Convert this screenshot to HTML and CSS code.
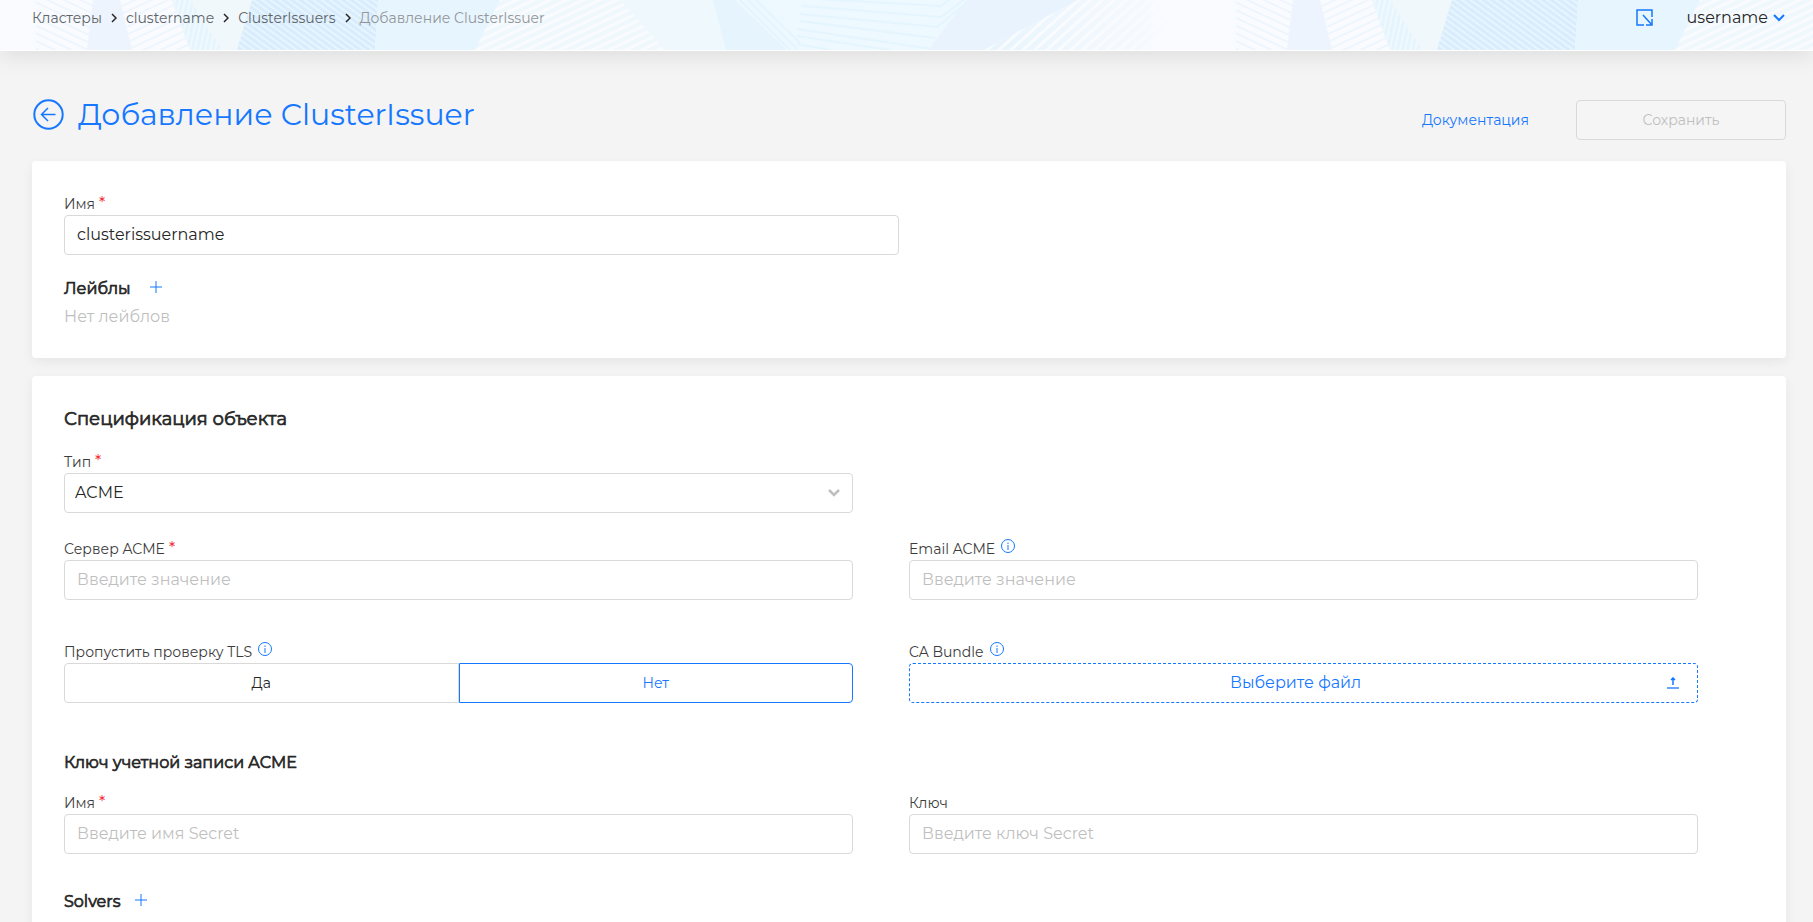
FILE: index.html
```html
<!DOCTYPE html>
<html lang="ru">
<head>
<meta charset="utf-8">
<title>Добавление ClusterIssuer</title>
<link rel="stylesheet" href="styles.css">
</head>
<body>
<header class="topbar">
  <svg class="topbar-art" aria-hidden="true">
    <defs>
      <pattern id="s1" width="4" height="7" patternUnits="userSpaceOnUse" patternTransform="rotate(25)"><rect width="4" height="2" fill="#eef6fd"/></pattern>
      <pattern id="s2" width="4" height="7" patternUnits="userSpaceOnUse" patternTransform="rotate(-25)"><rect width="4" height="2" fill="#eef6fd"/></pattern>
      <pattern id="s3" width="5" height="4" patternUnits="userSpaceOnUse" patternTransform="rotate(12)"><rect width="2" height="4" fill="#f0f9fc"/></pattern>
      <pattern id="s4" width="4" height="5" patternUnits="userSpaceOnUse" patternTransform="rotate(36)"><rect width="4" height="2" fill="#e6f5fe"/></pattern>
      <pattern id="s5" width="4" height="7" patternUnits="userSpaceOnUse" patternTransform="rotate(-25)"><rect width="4" height="3" fill="#f9fbff"/></pattern>
      <pattern id="s6" width="4" height="8" patternUnits="userSpaceOnUse" patternTransform="rotate(-42)"><rect width="4" height="3" fill="#f9fbff"/></pattern>
      <linearGradient id="fade"><stop offset="0" stop-color="#e6f4fc"/><stop offset="1" stop-color="#fafbff"/></linearGradient>
      <pattern id="art" width="1200" height="50" patternUnits="userSpaceOnUse">
        <rect width="1200" height="50" fill="#fafbff"/>
        <path d="M36 0H93L87 50H36Z" fill="url(#s1)"/>
        <path d="M93 0H120L132 50H87Z" fill="#edf4fe"/>
        <path d="M120 0H172L190 50H132Z" fill="url(#s2)"/>
        <path d="M172 0H252L237 50H190Z" fill="#e5f4fd"/>
        <path d="M172 0H252L237 50H190Z" fill="url(#s3)"/>
        <path d="M190 0H252L237 50H222Z" fill="#f1f8fc"/>
        <path d="M252 0H378L375 50H237Z" fill="#d8ecfd"/>
        <path d="M252 0H378L375 50H237Z" fill="url(#s4)"/>
        <path d="M378 0H713L726 50H375Z" fill="#e7f5fe"/>
        <path d="M500 0H713L726 50H475Z" fill="#eff8fd"/>
        <path d="M500 0H620L665 50H475Z" fill="url(#s5)"/>
        <path d="M713 0H970L926 50H726Z" fill="#e6f5fd"/>
        <path d="M735 0H967L928 50H787Z" fill="#eef9ff"/>
        <path d="M740 0L790 50M748 0L798 50M756 0L800 43M800 -2L941 6L967 -14M803 6L941 17L970 -5M800 14L937 27L970 0M800 21L935 38M797 29L932 49M797 36L890 50M797 44L830 50" fill="none" stroke="#e4f5fd" stroke-width="2"/>
        <path d="M967 0H1078L984 50H928Z" fill="#e8f3fe"/>
        <path d="M1078 0H1185L1150 50H984Z" fill="url(#fade)"/>
        <path d="M1078 0H1185L1150 50H984Z" fill="url(#s6)"/>
      </pattern>
    </defs>
    <rect width="100%" height="50" fill="url(#art)"/>
  </svg>
  <nav class="crumbs" aria-label="Навигация">
    <a href="#">Кластеры</a>
    <svg class="crumb-sep" viewBox="0 0 6 10" aria-hidden="true"><path d="M1 1l4 4-4 4"/></svg>
    <a href="#">clustername</a>
    <svg class="crumb-sep" viewBox="0 0 6 10" aria-hidden="true"><path d="M1 1l4 4-4 4"/></svg>
    <a href="#">ClusterIssuers</a>
    <svg class="crumb-sep" viewBox="0 0 6 10" aria-hidden="true"><path d="M1 1l4 4-4 4"/></svg>
    <span class="crumb-current">Добавление ClusterIssuer</span>
  </nav>
  <div class="account">
    <button class="icon-button" type="button" aria-label="Открыть">
      <svg class="open-icon" viewBox="0 0 18 18" aria-hidden="true"><path d="M8 16H1V1H16V8M7 6L16 16M16 10V16H10"/></svg>
    </button>
    <button class="user" type="button">username
      <svg class="user-arrow" viewBox="0 0 12 8" aria-hidden="true"><path d="M1 1l5 5 5-5"/></svg>
    </button>
  </div>
</header>

<main class="page">
  <div class="page-head">
    <a class="back" href="#" aria-label="Назад">
      <svg class="back-icon" viewBox="0 0 32 32" aria-hidden="true"><circle cx="16.5" cy="16.5" r="14.2" stroke-width="2"/><path d="M23.5 16.5H10M16 10L9.5 16.5L16 23" stroke-width="1.5"/></svg>
    </a>
    <h1 class="title">Добавление ClusterIssuer</h1>
    <a class="docs" href="#">Документация</a>
    <button class="save" type="button" disabled>Сохранить</button>
  </div>

  <section class="card card-meta">
    <div class="field field-name">
      <label class="label" for="name">Имя <span class="req">*</span></label>
      <input class="control" id="name" type="text" value="clusterissuername">
    </div>
    <div class="sub-head">
      <h2 class="subtitle">Лейблы</h2>
      <button class="icon-button" type="button" aria-label="Добавить лейбл"><svg class="plus" viewBox="0 0 12 12" aria-hidden="true"><path d="M6 0V12M0 6H12"/></svg></button>
    </div>
    <p class="empty">Нет лейблов</p>
  </section>

  <section class="card card-spec">
    <h2 class="spec-title">Спецификация объекта</h2>
    <div class="grid type-row">
      <div class="field">
        <label class="label" for="type">Тип <span class="req">*</span></label>
        <div class="select-wrap">
          <select class="control select" id="type"><option>ACME</option></select>
          <svg class="select-arrow" viewBox="0 0 12 8" aria-hidden="true"><path d="M1 1l5 5 5-5"/></svg>
        </div>
      </div>
    </div>
    <div class="grid">
      <div class="field">
        <label class="label" for="server">Сервер ACME <span class="req">*</span></label>
        <input class="control" id="server" type="text" placeholder="Введите значение">
      </div>
      <div class="field">
        <label class="label" for="email">Email ACME <svg class="info" viewBox="0 0 14 14" aria-hidden="true"><circle cx="7" cy="7" r="6.5"/><path d="M7 6V11M7 3.5V5"/></svg></label>
        <input class="control" id="email" type="text" placeholder="Введите значение">
      </div>
      <fieldset class="field toggle-field">
        <legend class="label">Пропустить проверку TLS <svg class="info" viewBox="0 0 14 14" aria-hidden="true"><circle cx="7" cy="7" r="6.5"/><path d="M7 6V11M7 3.5V5"/></svg></legend>
        <div class="toggle">
          <label class="option"><input class="option-input" type="radio" name="tls">Да</label>
          <label class="option"><input class="option-input" type="radio" name="tls" checked>Нет</label>
        </div>
      </fieldset>
      <div class="field">
        <label class="label" for="bundle">CA Bundle <svg class="info" viewBox="0 0 14 14" aria-hidden="true"><circle cx="7" cy="7" r="6.5"/><path d="M7 6V11M7 3.5V5"/></svg></label>
        <button class="control upload" id="bundle" type="button"><span class="upload-text">Выберите файл</span>
          <svg class="upload-icon" viewBox="0 0 12 12" aria-hidden="true"><path d="M0 11H12" stroke-width="2" opacity=".65"/><path d="M6 8V1M4 3L6 1L8 3" stroke-width="1.5"/></svg>
        </button>
      </div>
    </div>
    <h3 class="subtitle key-title">Ключ учетной записи ACME</h3>
    <div class="grid">
      <div class="field">
        <label class="label" for="secret-name">Имя <span class="req">*</span></label>
        <input class="control" id="secret-name" type="text" placeholder="Введите имя Secret">
      </div>
      <div class="field">
        <label class="label" for="secret-key">Ключ</label>
        <input class="control" id="secret-key" type="text" placeholder="Введите ключ Secret">
      </div>
    </div>
    <div class="sub-head solvers">
      <h3 class="subtitle">Solvers</h3>
      <button class="icon-button" type="button" aria-label="Добавить solver"><svg class="plus" viewBox="0 0 12 12" aria-hidden="true"><path d="M6 0V12M0 6H12"/></svg></button>
    </div>
  </section>
</main>
</body>
</html>
```
FILE: styles.css
```css
* { box-sizing: border-box; }
body {
  margin: 0;
  background: #f4f4f4;
  color: #262626;
  font-family: Montserrat, Inter, "Open Sans", sans-serif;
  font-size: 16px;
  line-height: 24px;
  overflow: hidden;
}
a { color: inherit; text-decoration: none; }
button, input, select { font: inherit; color: inherit; }
h1, h2, h3, p { margin: 0; }
svg { fill: none; stroke: currentColor; flex: none; }

.topbar {
  position: relative;
  display: flex;
  justify-content: space-between;
  height: 51px;
  padding: 6px 28px 0 32px;
  background: #fff;
  box-shadow: 0 4px 24px rgba(0, 0, 0, 0.1);
}
.topbar-art { position: absolute; inset: 0; width: 100%; height: 50px; stroke: none; }
.crumbs, .account { position: relative; display: flex; align-items: center; height: 24px; }
.crumbs { gap: 9px; font-size: 14px; color: #606468; }
.crumb-sep { width: 6px; height: 10px; color: #262626; stroke-width: 1.5; }
.crumb-current { color: #949699; }
.icon-button { display: flex; padding: 0; border: 0; background: none; color: #1677ff; cursor: pointer; }
.account { gap: 33px; }
.open-icon { width: 18px; height: 18px; stroke-width: 1.5; }
.user { display: flex; align-items: center; gap: 5px; padding: 0; border: 0; background: none; }
.user-arrow { width: 12px; height: 8px; color: #1677ff; stroke-width: 2; }

.page { padding: 49px 27px 0 32px; }
.page-head { display: flex; align-items: center; height: 40px; margin-bottom: 21px; color: #1677ff; }
.back { display: flex; margin-bottom: 12px; }
.back-icon { width: 32px; height: 32px; }
.title { flex: 1; margin: 0 0 10px 14px; font-size: 30px; line-height: 40px; font-weight: 400; }
.docs { margin-right: 47px; font-size: 14px; }
.save {
  width: 210px;
  height: 40px;
  border: 1px solid #d9d9d9;
  border-radius: 4px;
  background: #f5f5f5;
  color: #bfbfbf;
  font-size: 14px;
}

.card { padding: 32px; border-radius: 4px; background: #fff; box-shadow: 0 4px 12px rgba(0, 0, 0, 0.06); }
.card-meta { margin-bottom: 18px; padding-bottom: 29px; }
.field { display: flex; flex-direction: column; min-width: 0; }
.field-name { width: calc(50% - 10px); }
.label { display: flex; align-items: center; gap: 4px; height: 22px; padding: 0; font-size: 14px; line-height: 22px; color: #3c3c3c; }
.req { font-size: 16px; color: #f5222d; }
.info { width: 14px; height: 14px; margin: 0 0 6px 2px; color: #1677ff; }
.control {
  width: 100%;
  height: 40px;
  padding: 0 12px 2px;
  border: 1px solid #d9d9d9;
  border-radius: 4px;
  background: #fff;
}
.control::placeholder { color: #bfbfbf; opacity: 1; }
.sub-head { display: flex; align-items: center; gap: 19px; margin-top: 22px; }
.subtitle { font-size: 16px; line-height: 24px; font-weight: 400; -webkit-text-stroke: 0.7px; }
.plus { width: 12px; height: 12px; margin-bottom: 5px; }
.empty { margin-top: 4px; color: #bfbfbf; }

.card-spec { padding-right: 88px; }
.spec-title { margin-bottom: 21px; font-size: 18px; line-height: 22px; font-weight: 400; -webkit-text-stroke: 0.7px; }
.grid { display: grid; grid-template-columns: 1fr 1fr; column-gap: 56px; row-gap: 41px; }
.type-row { margin-bottom: 25px; }
.select-wrap { display: grid; align-items: center; }
.select { grid-area: 1 / 1; padding: 0 10px 1px; appearance: none; }
.select-arrow { grid-area: 1 / 1; justify-self: end; width: 12px; height: 8px; margin-right: 13px; color: #bfbfbf; stroke-width: 2.5; pointer-events: none; }
.toggle-field { margin: 0; padding: 0; border: 0; }
.toggle { display: flex; }
.option {
  display: grid;
  place-items: center;
  flex: 1;
  height: 40px;
  border: 1px solid #d9d9d9;
  border-radius: 4px 0 0 4px;
  font-size: 14px;
  cursor: pointer;
}
.option + .option { border-radius: 0 4px 4px 0; }
.option:has(:checked) { border-color: #1677ff; color: #1677ff; }
.option-input { position: absolute; opacity: 0; pointer-events: none; }
.upload { display: flex; align-items: center; padding: 0 18px 1px 14px; border: 1px dashed #1677ff; color: #1677ff; cursor: pointer; }
.upload-text { flex: 1; }
.upload-icon { width: 12px; height: 12px; }
.key-title { margin-top: 48px; margin-bottom: 17px; }
.solvers { gap: 15px; margin-top: 36px; }
```
